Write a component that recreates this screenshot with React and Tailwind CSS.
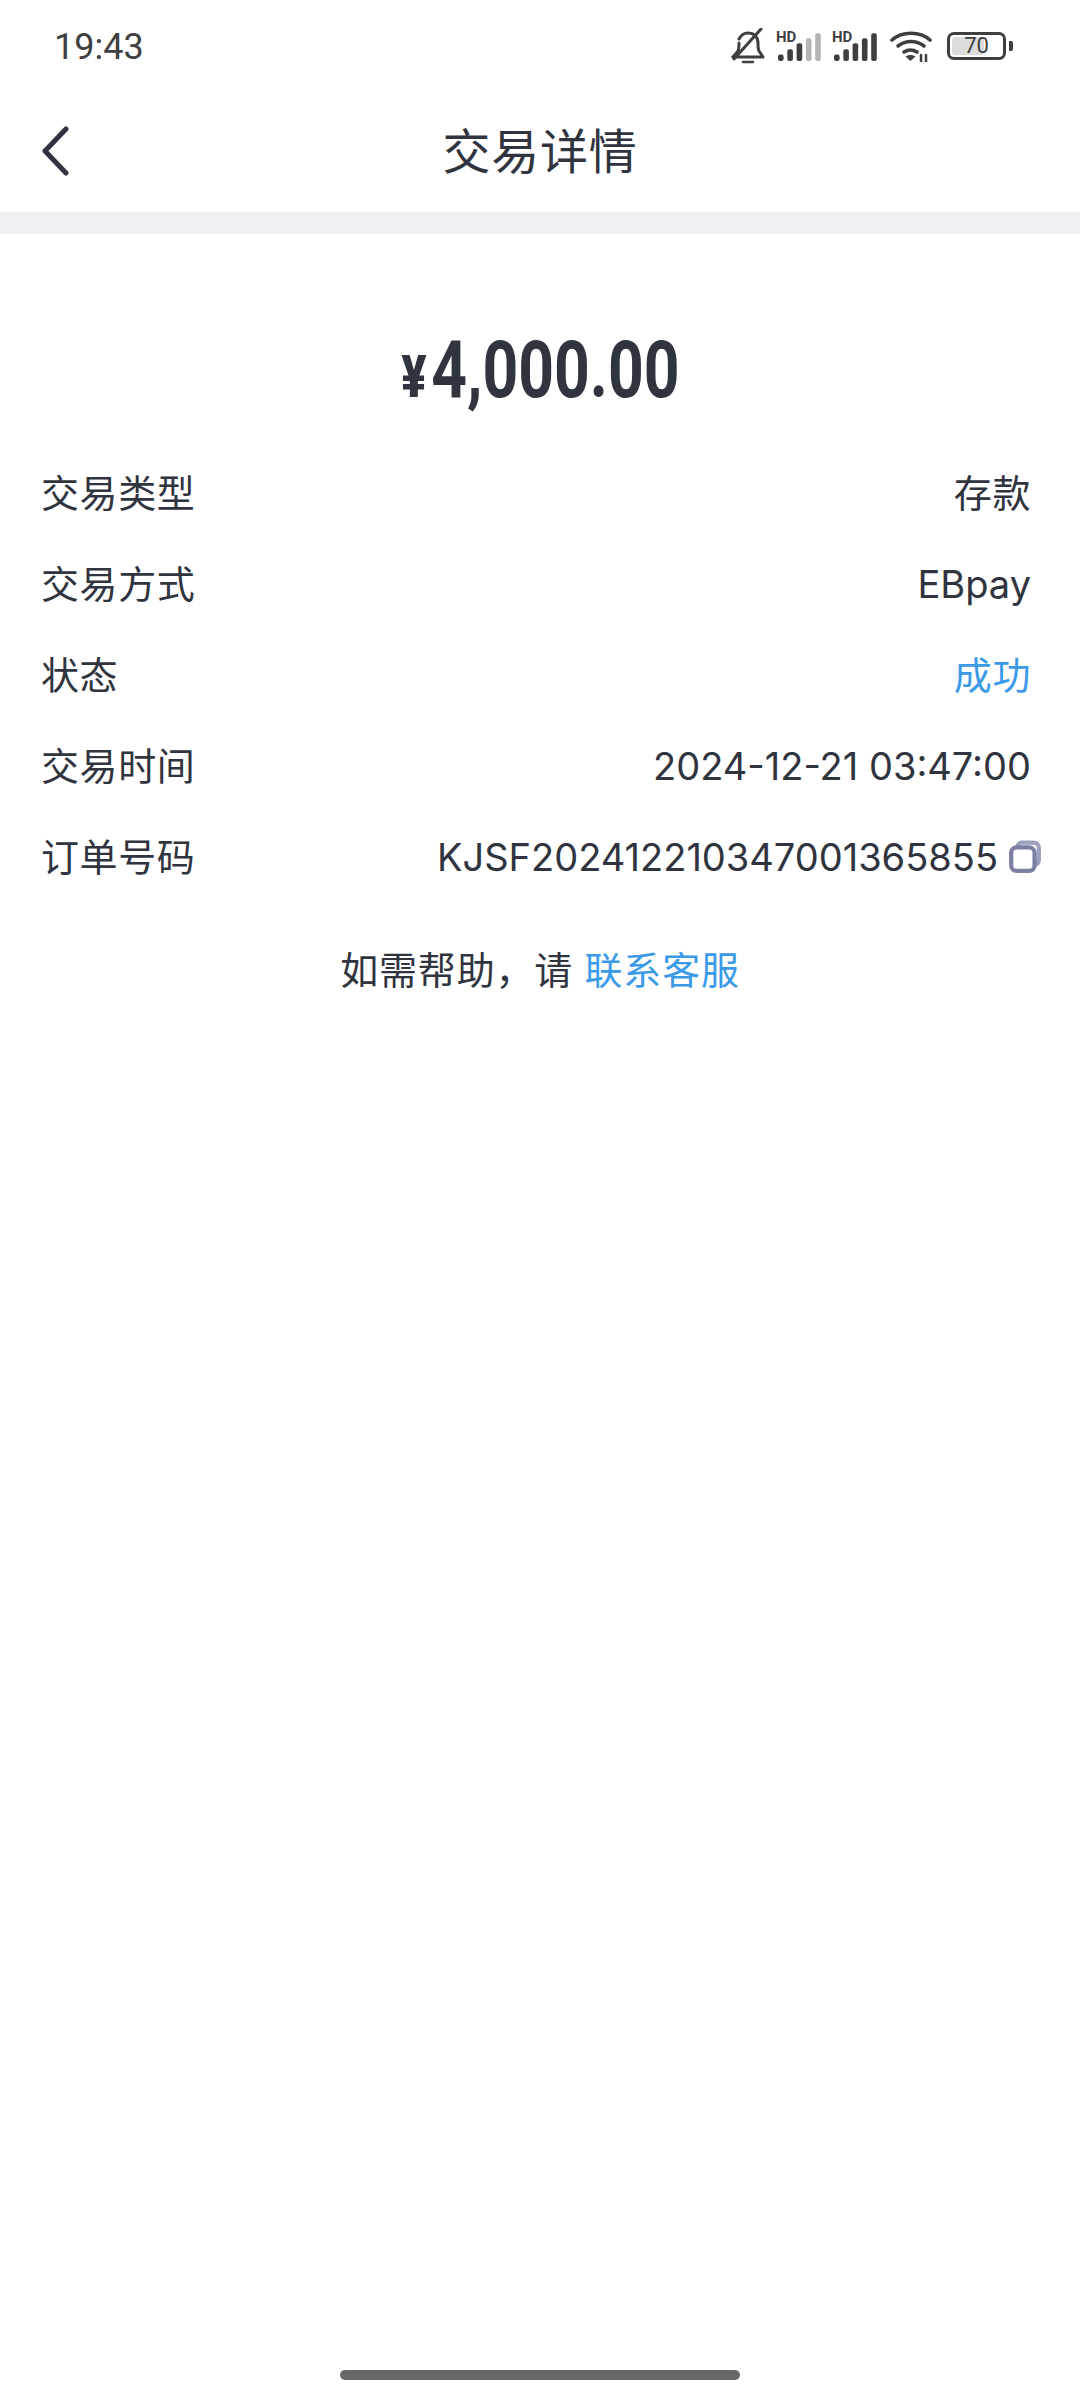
function Row({ label, children }) {
  return (
    <div className="flex h-[91px] items-center justify-between">
      <span className="tracking-[0.6px]">{label}</span>
      {children}
    </div>
  );
}
function Signal({ dim }) {
  const hs = [6.5, 11.7, 17.7, 22.7, 27.7];
  return (
    <div className="relative h-[30px] w-[45px]">
      <span className="absolute left-0 top-[-1px] font-['Roboto'] text-[15px] font-bold leading-[15px] text-[#3f3f3f]">HD</span>
      <svg width="45" height="30" viewBox="0 0 45 30" className="block">
        {hs.map((h, i) => (
          <rect key={i} x={2 + i * 9.3} y={30 - h} width="5.6" height={h} rx="2" fill={dim && i > 2 ? "#b5b5b5" : "#3f3f3f"} />
        ))}
      </svg>
    </div>
  );
}
export default function App() {
  return (
    <div className="flex h-[2400px] w-[1080px] flex-col overflow-hidden bg-white font-['Inter','Noto_Sans_CJK_SC',sans-serif] text-[#30343f]">
      <div className="flex h-[92px] items-center justify-between pl-[54px] pr-[67px]">
        <span className="pt-[2px] font-['Roboto'] text-[36px] text-[#404040]">19:43</span>
        <div className="flex items-center">
          <svg width="34" height="36" viewBox="0 0 34 36" fill="none" stroke="#3f3f3f" strokeWidth="3" strokeLinecap="round" strokeLinejoin="round" className="mr-[11px]">
            <path d="M2 29h30l-4-6c-1-2-1-5-1-8 0-6-4-10-10-10-4 0-7 2-9 6" />
            <path d="M8 15c0 3 0 6-1 8l-5 6" />
            <path d="M30 1 3 31" />
            <path d="M12 34h10" strokeWidth="2.500" />
          </svg>
          <div className="mr-[11px]"><Signal dim /></div>
          <div className="mr-[13px]"><Signal /></div>
          <svg width="42" height="31" viewBox="0 0 42 31" fill="none" stroke="#3f3f3f" strokeWidth="3.6" strokeLinecap="round" className="mr-[15px]">
            <path d="M2 9C12 0 30 0 40 9" />
            <path d="M8 15c8-6 18-6 26 0" />
            <path d="M14 21c4-2.500 9-2.500 13 0" />
            <path d="M20.500 30 15.500 25.500c3-2 7-2 10 0z" fill="#3f3f3f" stroke="none" />
            <path d="M31 24v7M36 24v7" strokeWidth="2.500" />
          </svg>
          <div className="flex items-center gap-[3px]">
            <div className="relative flex h-[28px] w-[59px] items-center justify-center rounded-[7px] border-[3px] border-[#3f3f3f] font-['Roboto'] text-[22px] leading-none text-[#3f3f3f]">
              <div className="absolute inset-y-[2px] left-[2px] w-[60%] rounded-[3px] bg-[#dcdcdc]" />
              <span className="relative">70</span>
            </div>
            <div className="h-[10px] w-[4px] rounded-r-[2px] bg-[#3f3f3f]" />
          </div>
        </div>
      </div>
      <div className="relative flex h-[120px] items-center justify-center text-[48px]">
        <svg width="28" height="50" viewBox="0 0 28 50" fill="none" stroke="#30343f" strokeWidth="5" strokeLinecap="round" strokeLinejoin="round" className="absolute left-[41px] top-[34px]">
          <path d="M25 3 4 25l21 22" />
        </svg>
        <span className="tracking-[0.7px]">交易详情</span>
      </div>
      <div className="h-[22px] bg-[#f1f1f5]" />
      <div className="flex h-[213px] items-start justify-center pt-[96px]">
        <span className="origin-center scale-x-[0.78] font-['Roboto'] text-[80px] font-bold leading-none">
          <span className="mr-[6px] text-[60px] font-black">¥</span>4,000.00
        </span>
      </div>
      <div className="px-[41px] text-[38px] leading-none">
        <Row label="交易类型"><span className="pr-[8px] tracking-[0.6px]">存款</span></Row>
        <Row label="交易方式"><span className="pr-[8px]">EBpay</span></Row>
        <Row label="状态"><span className="pr-[8px] tracking-[0.6px] text-[#3a9ae8]">成功</span></Row>
        <Row label="交易时间"><span className="pr-[8px]">2024-12-21 03:47:00</span></Row>
        <Row label="订单号码">
          <span className="-mr-[3px] flex items-center gap-[10px]">
            KJSF202412210347001365855
            <svg width="34" height="34" viewBox="0 0 32 32" fill="none" className="block">
              <path d="M9 5.500C10 3 11 2.500 13 2.500h11c3 0 5 2 5 5v11c0 2-1 4-3 4.500" stroke="#9ba0bd" strokeWidth="4" strokeLinecap="round" />
              <rect x="3" y="7" width="22" height="22" rx="5" stroke="#7a7fa3" strokeWidth="4" />
            </svg>
          </span>
        </Row>
      </div>
      <div className="mt-[49px] text-center text-[38px] leading-none tracking-[0.8px]">
        如需帮助，请 <span className="text-[#3a9ae8]">联系客服</span>
      </div>
      <div className="flex-1" />
      <div className="mx-auto mb-[20px] h-[10px] w-[400px] rounded-full bg-[#676767]" />
    </div>
  );
}
